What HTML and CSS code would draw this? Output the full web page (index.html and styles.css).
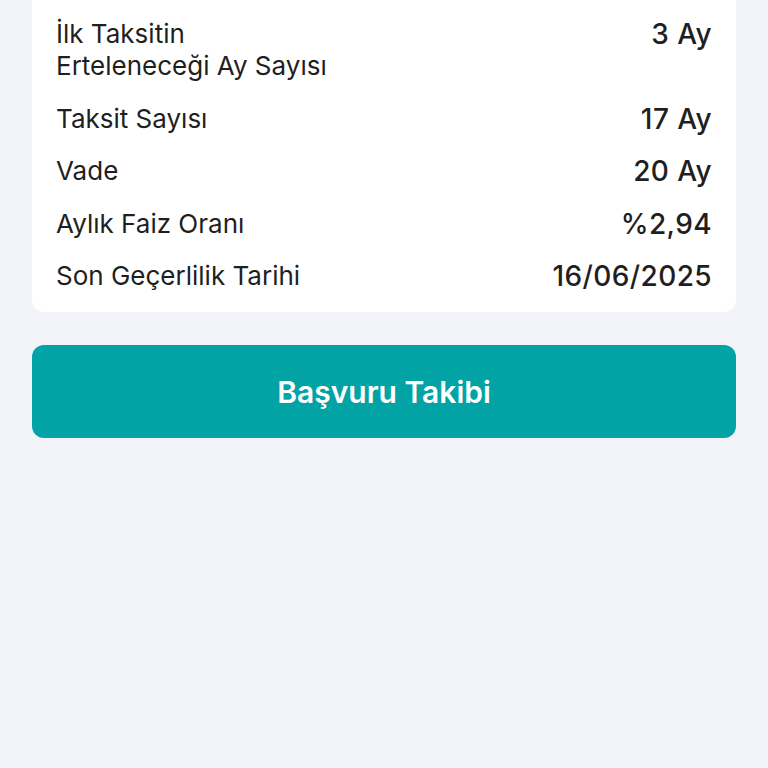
FILE: index.html
```html
<!DOCTYPE html>
<html lang="tr">
<head>
  <meta charset="UTF-8" />
  <meta name="viewport" content="width=device-width, initial-scale=1.0"/>
  <title>Başvuru Detayı</title>
  <link rel="stylesheet" href="styles.css">
</head>
<body>

  <div class="page">
    <div class="card">
      <div class="row">
        <span class="label">İlk Taksitin<br>Erteleneceği Ay Sayısı</span>
        <span class="value">3 Ay</span>
      </div>
      <div class="row">
        <span class="label">Taksit Sayısı</span>
        <span class="value">17 Ay</span>
      </div>
      <div class="row">
        <span class="label">Vade</span>
        <span class="value">20 Ay</span>
      </div>
      <div class="row">
        <span class="label">Aylık Faiz Oranı</span>
        <span class="value">%2,94</span>
      </div>
      <div class="row">
        <span class="label">Son Geçerlilik Tarihi</span>
        <span class="value">16/06/2025</span>
      </div>
    </div>

    <button class="track-btn" type="button">Başvuru Takibi</button>
  </div>

</body>
</html>
```

FILE: styles.css
```css
* {
  box-sizing: border-box;
}

body {
  margin: 0;
  background: #f2f3f8;
  color: #1c1c1e;
  font-family: 'Inter', sans-serif;
}

.page {
  padding: 0 32px;
  display: flex;
  flex-direction: column;
  gap: 33px;
}

.card {
  margin-top: -20px;
  background: #ffffff;
  border-radius: 12px;
  padding: 38px 24px 20px;
  display: flex;
  flex-direction: column;
  gap: 20.5px;
}

.row {
  display: flex;
  justify-content: space-between;
  align-items: flex-start;
  gap: 16px;
}

.label {
  font-size: 26px;
  line-height: 32px;
  color: #1f1f22;
}

.value {
  font-size: 28px;
  line-height: 32px;
  font-weight: 500;
  letter-spacing: 0.4px;
  color: #1f1f22;
  white-space: nowrap;
}

.track-btn {
  height: 93px;
  border: none;
  border-radius: 12px;
  background: #02a3a4;
  color: #ffffff;
  font-family: 'Inter', sans-serif;
  font-size: 30px;
  font-weight: 600;
  cursor: pointer;
}
```
